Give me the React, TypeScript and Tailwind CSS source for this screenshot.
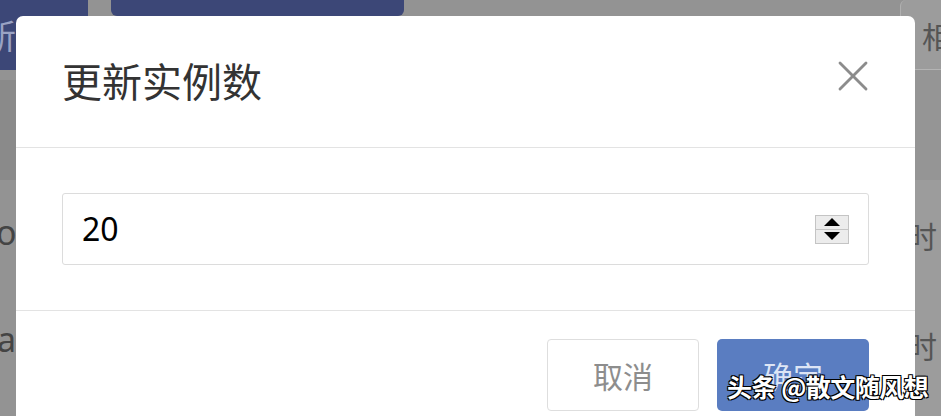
import { X } from "lucide-react";

const cjk = { fontFamily: '"Noto Sans CJK SC", "Noto Sans", sans-serif' };

function Spinner() {
  return (
    <div className="flex flex-col w-[34px] h-[29px] border border-[#c4c4c4] bg-[#ececec]">
      <div className="flex-1 flex items-center justify-center border-b border-[#c4c4c4]">
        <div className="w-0 h-0 border-l-[8px] border-r-[8px] border-b-[8px] border-l-transparent border-r-transparent border-b-black" />
      </div>
      <div className="flex-1 flex items-center justify-center">
        <div className="w-0 h-0 border-l-[8px] border-r-[8px] border-t-[8px] border-l-transparent border-r-transparent border-t-black" />
      </div>
    </div>
  );
}

export default function App() {
  return (
    <div className="relative w-[941px] h-[416px] overflow-hidden bg-[#939393]" style={cjk}>
      {/* dimmed page behind the dialog */}
      <div className="flex gap-[23px] h-[70px]">
        <div className="w-[88px] h-[70px] rounded-br-[6px] bg-[#3c4777] text-[#9aa3c4] text-[34px] leading-[70px] overflow-hidden">
          <span className="-ml-[18px]">新</span>
        </div>
        <div className="w-[293px] h-[16px] rounded-b-[6px] bg-[#3c4777]" />
      </div>
      <div className="absolute left-[0px] top-[80px] w-[16px] h-[100px] bg-[#8a8a8a]" />
      <div className="absolute left-[-4px] top-[215px] text-[34px] leading-none text-[#444]" style={{ fontFamily: '"Noto Sans", sans-serif' }}>o</div>
      <div className="absolute left-[-3px] top-[322px] text-[34px] leading-none text-[#444]" style={{ fontFamily: '"Noto Sans", sans-serif' }}>at</div>

      <div className="absolute left-[900px] top-0 w-[60px] h-[416px] rounded-tl-[6px] bg-[#9c9c9c] border-l border-[#b0b0b0]">
        <div className="h-[70px] border-b border-[#b4b4b4] text-[#555] text-[30px] leading-[70px] pl-[21px]">相</div>
        <div className="h-[110px] bg-[#959595]" />
        <div className="text-[#555] text-[30px] leading-none pl-[6px] mt-[40px]">时</div>
        <div className="text-[#555] text-[30px] leading-none pl-[6px] mt-[80px]">时</div>
      </div>

      {/* dialog */}
      <div className="absolute left-[16px] top-[16px] w-[899px] h-[460px] rounded-[7px] bg-white flex flex-col">
        <div className="h-[132px] flex items-center justify-between pl-[46px] pr-[36px] border-b border-[#e3e3e3]">
          <div className="text-[40px] leading-none text-[#333] -mt-[4px]">更新实例数</div>
          <X className="w-[52px] h-[52px] text-[#8c8c8c] -mt-[12px]" strokeWidth={1.3} />
        </div>
        <div className="h-[163px] px-[46px] pt-[45px] border-b border-[#e3e3e3]">
          <div className="h-[72px] border border-[#dcdcdc] rounded-[3px] flex items-center justify-between pl-[19px] pr-[19px]">
            <span className="text-[32px] text-black" style={{ fontFamily: '"Noto Sans", sans-serif' }}>20</span>
            <Spinner />
          </div>
        </div>
        <div className="flex justify-end gap-[18px] px-[46px] pt-[28px]">
          <div className="w-[152px] h-[72px] border border-[#dedede] rounded-[4px] flex items-center justify-center text-[30px] text-[#8d8d8d]">取消</div>
          <div className="w-[152px] h-[72px] rounded-[5px] bg-[#5a7dc1] flex items-center justify-center text-[30px] text-[#dde5f5]">确定</div>
        </div>
      </div>

      {/* watermark */}
      <div
        className="absolute left-[727px] top-[374px] text-[25px] font-bold leading-none text-white whitespace-nowrap tracking-[-0.5px]"
        style={{ textShadow: "1px 1px 0 #000, -1px -1px 0 #000, 1px -1px 0 #000, -1px 1px 0 #000" }}
      >
        头条 @散文随风想
      </div>
    </div>
  );
}
